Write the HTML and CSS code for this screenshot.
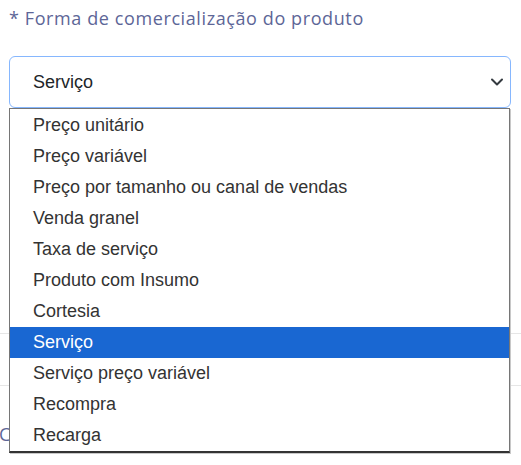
FILE: index.html
```html
<!DOCTYPE html>
<html lang="pt">
<head>
<meta charset="utf-8">
<link rel="stylesheet" href="styles.css">
</head>
<body>
<div class="page">
  <label class="field-label">* Forma de comercialização do produto</label>
  <div class="select-wrap">
    <div class="select">
      <span class="select-value">Serviço</span>
      <svg class="chevron" width="14" height="10" viewBox="0 0 14 10"><path d="M2 2.5 L7 7.5 L12 2.5" fill="none" stroke="#343a40" stroke-width="2" stroke-linecap="round" stroke-linejoin="round"/></svg>
    </div>
    <ul class="options">
      <li>Preço unitário</li>
      <li>Preço variável</li>
      <li>Preço por tamanho ou canal de vendas</li>
      <li>Venda granel</li>
      <li>Taxa de serviço</li>
      <li>Produto com Insumo</li>
      <li>Cortesia</li>
      <li class="selected">Serviço</li>
      <li>Serviço preço variável</li>
      <li>Recompra</li>
      <li>Recarga</li>
    </ul>
  </div>
  <div class="behind">
    <div class="row"></div>
    <div class="row"></div>
    <div class="next-label">C</div>
  </div>
</div>
</body>
</html>
```

FILE: styles.css
```css
* { box-sizing: border-box; }
html, body { margin: 0; padding: 0; background: #fff; }
body { width: 521px; height: 465px; overflow: hidden; }
.page { padding: 6px 0 0 9px; position: relative; }
.field-label {
  display: block;
  font-family: "Open Sans", sans-serif;
  font-size: 18px;
  line-height: 24px;
  letter-spacing: 0.6px;
  color: #5d6697;
}
.select-wrap { position: relative; margin-top: 26px; width: 502px; }
.select {
  height: 52px;
  border: 1px solid #86b7fe;
  border-radius: 6px;
  display: flex;
  align-items: center;
  justify-content: space-between;
  padding: 0 6px 0 23px;
  font-family: "Liberation Sans", Arial, sans-serif;
  font-size: 18px;
  color: #212529;
}
.chevron { display: block; }
.options {
  position: absolute;
  left: 0;
  top: 52px;
  width: 501px;
  margin: 0;
  padding: 1px 0 0 0;
  list-style: none;
  background: #fff;
  border: 1px solid #767676;
  border-bottom: 2px solid #333;
  box-shadow: 1px 1px 0 #c8c8c8;
  font-family: "Liberation Sans", Arial, sans-serif;
  font-size: 18px;
  color: #333;
  z-index: 2;
}
.options li { height: 31px; line-height: 31px; padding-left: 23px; }
.options li.selected { background: #1967d2; color: #fff; }
.behind { position: relative; margin-left: -9px; }
.row { height: 52px; border-bottom: 1px solid #e6e6e6; }
.row:first-child { margin-top: 174px; }
.next-label {
  margin-top: 36px;
  font-family: "Open Sans", sans-serif;
  font-size: 18px;
  color: #5d6697;
  margin-left: -1px;
}
```
